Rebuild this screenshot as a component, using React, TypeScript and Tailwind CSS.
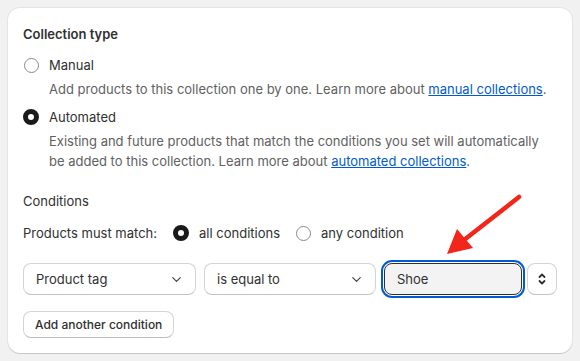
import { ChevronDown } from "lucide-react";

function Radio({ checked }: { checked?: boolean }) {
  return checked ? (
    <span className="box-border block h-4 w-4 shrink-0 rounded-full border-[5px] border-[#1a1a1a] bg-white" />
  ) : (
    <span className="box-border block h-[15px] w-[15px] shrink-0 rounded-full border border-[#8a8a8a] bg-white" />
  );
}

function Select({ label, width }: { label: string; width: string }) {
  return (
    <div
      className={`${width} flex h-8 shrink-0 items-center justify-between rounded-lg border border-[#d4d4d4] border-b-[#c2c2c2] bg-white pl-3 pr-[11px] text-[13px] text-[#303030]`}
    >
      <span>{label}</span>
      <ChevronDown className="h-[15px] w-[15px] text-[#4a4a4a]" strokeWidth={2} />
    </div>
  );
}

export default function App() {
  return (
    <div className="relative h-[361px] w-[580px] overflow-hidden bg-[#f1f1f1] p-2 font-['Inter',sans-serif] text-[13px] leading-5 text-[#303030]">
      <div className="rounded-xl bg-white px-[15px] pb-[15px] pt-4 shadow-[0_1px_0_0_rgba(0,0,0,0.12),0_0_0_1px_rgba(0,0,0,0.05)]">
        <h2 className="font-semibold">Collection type</h2>

        <div className="mt-[11px] flex items-center gap-[10px] pl-[1px]">
          <Radio />
          <span>Manual</span>
        </div>
        <p className="mt-1 pl-[26px] text-[#616161]">
          Add products to this collection one by one. Learn more about{" "}
          <a className="text-[#005bd3] underline">manual collections</a>.
        </p>

        <div className="mt-2 flex items-center gap-[10px]">
          <Radio checked />
          <span>Automated</span>
        </div>
        <p className="mt-1 pl-[26px] text-[#616161]">
          Existing and future products that match the conditions you set will automatically
          be added to this collection. Learn more about{" "}
          <a className="text-[#005bd3] underline">automated collections</a>.
        </p>

        <h3 className="mt-5">Conditions</h3>

        <div className="mt-3 flex items-center">
          <span>Products must match:</span>
          <span className="ml-[16px] flex items-center gap-[10px]">
            <Radio checked />
            all conditions
          </span>
          <span className="ml-[16px] flex items-center gap-[10px]">
            <Radio />
            any condition
          </span>
        </div>

        <div className="mt-5 flex items-center">
          <Select label="Product tag" width="w-[173px]" />
          <div className="ml-2">
            <Select label="is equal to" width="w-[172px]" />
          </div>
          <div className="ml-2 flex h-8 flex-1 items-center rounded-lg border border-[#303030] bg-[#f3f3f3] px-3 text-[#303030] outline-2 outline-offset-1 outline-[#005bd3]">
            Shoe
          </div>
          <div className="ml-[5px] flex h-8 w-[30px] items-center justify-center rounded-lg border border-[#d4d4d4] border-b-[#c2c2c2] bg-white">
            <svg viewBox="0 0 12 16" className="h-4 w-3" fill="none" stroke="#303030" strokeWidth="1.8" strokeLinecap="round" strokeLinejoin="round">
              <path d="M3.5 6 6 3.5 8.5 6" />
              <path d="M3.5 10 6 12.5 8.5 10" />
            </svg>
          </div>
        </div>

        <button className="mt-4 h-[27px] rounded-lg border border-[#d4d4d4] border-b-[#bdbdbd] bg-white px-[11px] text-[12px] font-medium text-[#303030]">
          Add another condition
        </button>
      </div>

      <svg className="pointer-events-none absolute left-0 top-0" width="580" height="361" viewBox="0 0 580 361">
        <line x1="519" y1="197" x2="464" y2="240" stroke="#f2261a" strokeWidth="4.5" strokeLinecap="round" />
        <polygon points="447,254 457,229 473,248" fill="#f2261a" />
      </svg>
    </div>
  );
}
